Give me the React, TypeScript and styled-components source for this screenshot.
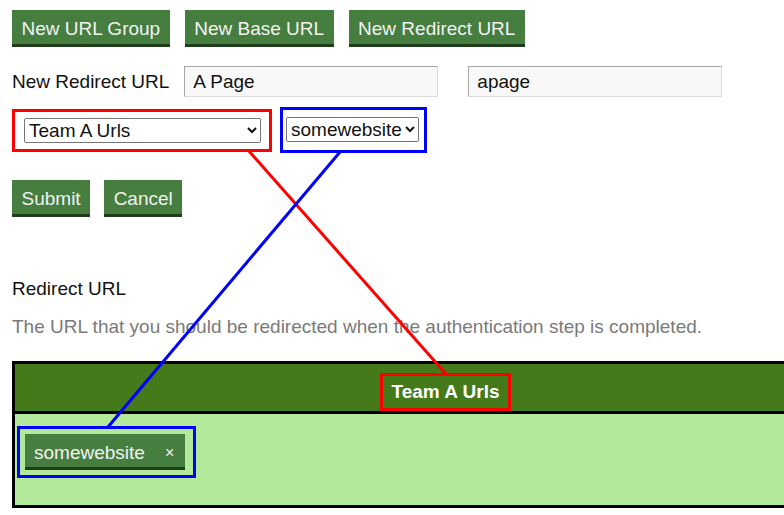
import React from "react";
import styled, { createGlobalStyle } from "styled-components";

const Global = createGlobalStyle`
  html, body { margin: 0; padding: 0; background: #fff; }
  body { font-family: "Liberation Sans", Arial, sans-serif; font-size: 19px; color: #111; overflow: hidden; }
`;

const Page = styled.div`
  position: relative;
  width: 784px;
  height: 515px;
  overflow: hidden;
  padding: 10px 0 0 12px;
  box-sizing: border-box;
`;

const Toolbar = styled.div`
  display: flex;
  gap: 15px;
  margin-bottom: 19px;
`;

const Button = styled.button`
  font-family: "Liberation Sans", Arial, sans-serif;
  font-size: 19px;
  color: #f2f2f2;
  background: #467e40;
  border: none;
  border-bottom: 3px solid #1f3d1b;
  height: 37px;
  padding: 4px 9.5px 0;
  margin: 0;
  cursor: pointer;
  line-height: 30px;
  box-sizing: border-box;
`;

const FormRow = styled.div`
  display: flex;
  align-items: center;
  margin-bottom: 10px;
`;

const Label = styled.span`
  font-size: 19px;
  color: #111;
  margin-right: 15px;
`;

const TextInput = styled.input<{ $gap?: number }>`
  font-family: "Liberation Sans", Arial, sans-serif;
  font-size: 19px;
  color: #111;
  width: 254px;
  height: 31px;
  box-sizing: border-box;
  padding: 0 8px;
  background: #f8f8f8;
  border: 1px solid #dcdcdc;
  border-top-color: #a6a6a6;
  border-left-color: #a6a6a6;
  margin: 0 ${(p) => p.$gap ?? 0}px 0 0;
  outline: none;
`;

const SelectRow = styled.div`
  display: flex;
  align-items: center;
  gap: 8px;
`;

const Highlight = styled.div<{ $color: string; $pad: string }>`
  border: 3px solid ${(p) => p.$color};
  padding: ${(p) => p.$pad};
  display: inline-flex;
  align-items: center;
`;

const Select = styled.select<{ $width?: number }>`
  font-family: "Liberation Sans", Arial, sans-serif;
  font-size: 19px;
  color: #111;
  height: 25px;
  ${(p) => (p.$width ? `width: ${p.$width}px;` : "")}
  margin: 0;
`;

const ButtonRow = styled.div`
  display: flex;
  gap: 14px;
  margin-top: 27px;
`;

const SectionTitle = styled.div`
  font-size: 19px;
  color: #111;
  margin-top: 61px;
  line-height: 22px;
`;

const Description = styled.div`
  font-size: 19px;
  color: #7a7a7a;
  margin-top: 16px;
  line-height: 22px;
`;

const Table = styled.div`
  margin-top: 23px;
  width: 861px;
  border: 3px solid #000;
  box-sizing: content-box;
`;

const TableHeader = styled.div`
  height: 47px;
  background: #447a1a;
  border-bottom: 3px solid #000;
  display: flex;
  justify-content: center;
  align-items: flex-end;
`;

const HeaderTitle = styled.div`
  font-weight: bold;
  font-size: 19px;
  color: #fff;
  border: 3px solid #ff0000;
  height: 32px;
  line-height: 32px;
  padding: 0 8px;
`;

const TableBody = styled.div`
  height: 91px;
  background: #b2e99a;
  padding: 12px 0 0 2px;
  box-sizing: border-box;
`;

const Chip = styled.div`
  display: inline-flex;
  align-items: center;
  background: #467e40;
  border-bottom: 3px solid #1f3d1b;
  height: 36px;
  box-sizing: border-box;
  padding: 5px 11px 0 9px;
  color: #f2f2f2;
  font-size: 19px;
`;

const ChipClose = styled.span`
  font-size: 16px;
  margin-left: 20px;
  color: #f2f2f2;
`;

const Overlay = styled.svg`
  position: absolute;
  left: 0;
  top: 0;
  pointer-events: none;
`;

export default function App() {
  return (
    <>
      <Global />
      <Page>
        <Toolbar>
          <Button>New URL Group</Button>
          <Button>New Base URL</Button>
          <Button>New Redirect URL</Button>
        </Toolbar>
        <FormRow>
          <Label>New Redirect URL</Label>
          <TextInput defaultValue="A Page" $gap={30} />
          <TextInput defaultValue="apage" />
        </FormRow>
        <SelectRow>
          <Highlight $color="#ff0000" $pad="6px 8px 6px 9px">
            <Select $width={237} defaultValue="a">
              <option value="a">Team A Urls</option>
            </Select>
          </Highlight>
          <Highlight $color="#0000ff" $pad="7px 5px 8px 3px">
            <Select defaultValue="s">
              <option value="s">somewebsite</option>
            </Select>
          </Highlight>
        </SelectRow>
        <ButtonRow>
          <Button>Submit</Button>
          <Button>Cancel</Button>
        </ButtonRow>
        <SectionTitle>Redirect URL</SectionTitle>
        <Description>
          The URL that you should be redirected when the authentication step is completed.
        </Description>
        <Table>
          <TableHeader>
            <HeaderTitle>Team A Urls</HeaderTitle>
          </TableHeader>
          <TableBody>
            <Highlight $color="#0000ff" $pad="5px 8px 5px 5px">
              <Chip>
                somewebsite
                <ChipClose>×</ChipClose>
              </Chip>
            </Highlight>
          </TableBody>
        </Table>
        <Overlay width="784" height="515" viewBox="0 0 784 515">
          <line x1="248" y1="150" x2="446" y2="374" stroke="#ff0000" strokeWidth="3" />
          <line x1="340" y1="152" x2="108" y2="427" stroke="#0000ff" strokeWidth="3" />
        </Overlay>
      </Page>
    </>
  );
}
